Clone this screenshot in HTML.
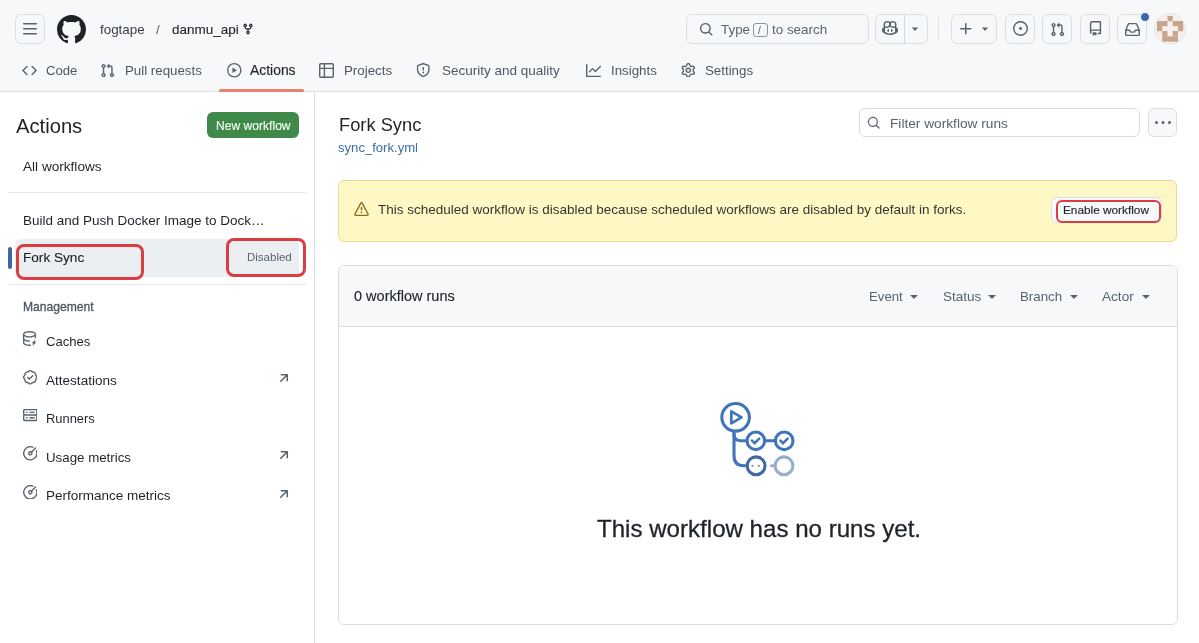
<!DOCTYPE html>
<html><head><meta charset="utf-8"><style>
html,body{margin:0;padding:0;width:1199px;height:643px;overflow:hidden;background:#fff;font-family:"Liberation Sans",sans-serif;}
.t{position:absolute;white-space:nowrap;line-height:1;will-change:transform;}
.b{position:absolute;display:block;}
</style></head><body>
<div class="b" style="left:0px;top:0px;width:1199px;height:92px;background:#f6f8fa;"></div>
<div class="b" style="left:0px;top:91px;width:1199px;height:1px;background:#d8dee4;"></div>
<div class="b" style="left:15px;top:14px;width:30px;height:30px;border:1px solid #dadfe4;border-radius:6px;box-sizing:border-box;background:#f6f8fa;"></div>
<svg class="b" style="left:22px;top:21px;" width="16" height="16" viewBox="0 0 16 16"><path fill="#59636e" d="M1 2.75A.75.75 0 0 1 1.75 2h12.5a.75.75 0 0 1 0 1.5H1.75A.75.75 0 0 1 1 2.75Zm0 5A.75.75 0 0 1 1.75 7h12.5a.75.75 0 0 1 0 1.5H1.75A.75.75 0 0 1 1 7.75ZM1.75 12h12.5a.75.75 0 0 1 0 1.5H1.75a.75.75 0 0 1 0-1.5Z"/></svg>
<svg class="b" style="left:57px;top:14.5px;" width="29" height="29" viewBox="0 0 16 16"><path fill="#1f2328" d="M8 0c4.42 0 8 3.58 8 8a8.013 8.013 0 0 1-5.45 7.59c-.4.08-.55-.17-.55-.38 0-.27.01-1.13.01-2.2 0-.75-.25-1.23-.54-1.48 1.78-.2 3.65-.88 3.65-3.95 0-.88-.31-1.59-.82-2.15.08-.2.36-1.02-.08-2.12 0 0-.67-.22-2.2.82-.64-.18-1.32-.27-2-.27-.68 0-1.36.09-2 .27-1.53-1.03-2.2-.82-2.2-.82-.44 1.1-.16 1.92-.08 2.12-.51.56-.82 1.28-.82 2.15 0 3.06 1.86 3.75 3.64 3.95-.23.2-.44.55-.51 1.07-.46.21-1.61.55-2.33-.66-.15-.24-.6-.83-1.23-.82-.67.01-.27.38.01.53.34.19.73.9.82 1.13.16.45.68 1.31 2.69.94 0 .67.01 1.3.01 1.49 0 .21-.15.45-.55.38A7.995 7.995 0 0 1 0 8c0-4.42 3.58-8 8-8Z"/></svg>
<div class="t" style="left:99.80px;top:23.00px;font-size:13.4px;color:#3a4046;">fogtape</div>
<div class="t" style="left:155.50px;top:23.00px;font-size:13.4px;color:#59636e;">/</div>
<div class="t" style="left:171.80px;top:23.00px;font-size:13.5px;color:#1f2328;-webkit-text-stroke:0.12px #1f2328;">danmu_api</div>
<svg class="b" style="left:242px;top:23.2px;" width="12" height="12" viewBox="0 0 16 16"><path fill="#1f2328" d="M5 5.372v.878c0 .414.336.75.75.75h4.5a.75.75 0 0 0 .75-.75v-.878a2.25 2.25 0 1 1 1.5 0v.878a2.25 2.25 0 0 1-2.25 2.25h-1.5v2.128a2.251 2.251 0 1 1-1.5 0V8.5h-1.5A2.25 2.25 0 0 1 3.5 6.25v-.878a2.25 2.25 0 1 1 1.5 0ZM5 3.25a.75.75 0 1 0-1.5 0 .75.75 0 0 0 1.5 0Zm6.75.75a.75.75 0 1 0 0-1.5.75.75 0 0 0 0 1.5Zm-3 8.75a.75.75 0 1 0-1.5 0 .75.75 0 0 0 1.5 0Z"/></svg>
<div class="b" style="left:686px;top:14px;width:183px;height:30px;border:1px solid #dadfe4;border-radius:6px;box-sizing:border-box;background:#f6f8fa;"></div>
<svg class="b" style="left:698.5px;top:21.5px;" width="14.5" height="14.5" viewBox="0 0 16 16"><path fill="#59636e" d="M10.68 11.74a6 6 0 0 1-7.922-8.982 6 6 0 0 1 8.982 7.922l3.04 3.04a.749.749 0 0 1-.326 1.275.749.749 0 0 1-.734-.215ZM11.5 7a4.499 4.499 0 1 0-8.997 0A4.499 4.499 0 0 0 11.5 7Z"/></svg>
<div class="t" style="left:721.00px;top:22.50px;font-size:13.4px;color:#59636e;">Type</div>
<div class="b" style="left:753px;top:23px;width:15px;height:14px;border:1px solid #8c959f;border-radius:3px;box-sizing:border-box;"></div>
<div class="t" style="left:758.00px;top:25.51px;font-size:10px;color:#59636e;">/</div>
<div class="t" style="left:772.00px;top:22.50px;font-size:13.4px;color:#59636e;">to search</div>
<div class="b" style="left:875px;top:14px;width:53px;height:30px;border:1px solid #dadfe4;border-radius:6px;box-sizing:border-box;background:#f6f8fa;"></div>
<div class="b" style="left:904px;top:14px;width:1px;height:30px;background:#d1d9e0;"></div>
<svg class="b" style="left:882px;top:20.3px;" width="16" height="16" viewBox="0 0 16 16"><path fill="#59636e" d="M7.998 15.035c-4.562 0-7.873-2.914-7.998-3.749V9.338c.085-.628.677-1.686 1.588-2.065.013-.07.024-.143.036-.218.029-.183.06-.384.126-.612-.201-.508-.254-1.084-.254-1.656 0-.87.128-1.769.693-2.484.579-.733 1.494-1.124 2.724-1.261 1.206-.134 2.262.034 2.944.765.05.053.096.108.139.165.044-.057.094-.112.143-.165.682-.731 1.738-.899 2.944-.765 1.23.137 2.145.528 2.724 1.261.566.715.693 1.614.693 2.484 0 .572-.053 1.148-.254 1.656.066.228.098.429.126.612.012.076.024.148.037.218.924.385 1.522 1.471 1.591 2.095v1.872c0 .766-3.351 3.795-8.002 3.795Zm0-1.485c2.28 0 4.584-1.11 5.002-1.433V7.862l-.023-.116c-.49.21-1.075.291-1.727.291-1.146 0-2.059-.327-2.71-.991A3.222 3.222 0 0 1 8 6.303a3.24 3.24 0 0 1-.544.743c-.65.664-1.563.991-2.71.991-.652 0-1.236-.081-1.727-.291l-.023.116v4.255c.419.323 2.722 1.433 5.002 1.433ZM6.762 2.83c-.193-.206-.637-.413-1.682-.297-1.019.113-1.479.404-1.713.7-.247.312-.369.789-.369 1.554 0 .793.129 1.171.308 1.371.162.181.519.379 1.442.379.853 0 1.339-.235 1.638-.54.315-.322.527-.827.617-1.553.117-.935-.037-1.395-.241-1.614Zm4.155-.297c-1.044-.116-1.488.091-1.681.297-.204.219-.359.679-.242 1.614.091.726.303 1.231.618 1.553.299.305.784.54 1.638.54.922 0 1.28-.198 1.442-.379.179-.2.308-.578.308-1.371 0-.765-.123-1.242-.37-1.554-.233-.296-.693-.587-1.713-.7Z"/><path fill="#59636e" d="M6.25 9.037a.75.75 0 0 1 .75.75v1.501a.75.75 0 0 1-1.5 0V9.787a.75.75 0 0 1 .75-.75Zm4.25.75v1.501a.75.75 0 0 1-1.5 0V9.787a.75.75 0 0 1 1.5 0Z"/></svg>
<svg class="b" style="left:910px;top:25.3px;" width="10" height="10" viewBox="2 4 12 12"><path fill="#59636e" d="m4.427 7.427 3.396 3.396a.25.25 0 0 0 .354 0l3.396-3.396A.25.25 0 0 0 11.396 7H4.604a.25.25 0 0 0-.177.427Z"/></svg>
<div class="b" style="left:938px;top:17px;width:1px;height:23px;background:#dde1e5;"></div>
<div class="b" style="left:951px;top:14px;width:46px;height:30px;border:1px solid #dadfe4;border-radius:6px;box-sizing:border-box;background:#f6f8fa;"></div>
<svg class="b" style="left:958px;top:21px;" width="16" height="16" viewBox="0 0 16 16"><path fill="#59636e" d="M7.75 2a.75.75 0 0 1 .75.75V7h4.25a.75.75 0 0 1 0 1.5H8.5v4.25a.75.75 0 0 1-1.5 0V8.5H2.75a.75.75 0 0 1 0-1.5H7V2.75A.75.75 0 0 1 7.75 2Z"/></svg>
<svg class="b" style="left:980px;top:25.3px;" width="10" height="10" viewBox="2 4 12 12"><path fill="#59636e" d="m4.427 7.427 3.396 3.396a.25.25 0 0 0 .354 0l3.396-3.396A.25.25 0 0 0 11.396 7H4.604a.25.25 0 0 0-.177.427Z"/></svg>
<div class="b" style="left:1005px;top:14px;width:30px;height:30px;border:1px solid #dadfe4;border-radius:6px;box-sizing:border-box;background:#f6f8fa;"></div>
<svg class="b" style="left:1012.5px;top:21px;" width="15" height="15" viewBox="0 0 16 16"><path fill="#59636e" d="M8 9.5a1.5 1.5 0 1 0 0-3 1.5 1.5 0 0 0 0 3Z"/><path fill="#59636e" d="M8 0a8 8 0 1 1 0 16A8 8 0 0 1 8 0ZM1.5 8a6.5 6.5 0 1 0 13 0 6.5 6.5 0 0 0-13 0Z"/></svg>
<div class="b" style="left:1042px;top:14px;width:30px;height:30px;border:1px solid #dadfe4;border-radius:6px;box-sizing:border-box;background:#f6f8fa;"></div>
<svg class="b" style="left:1049.6px;top:21.8px;" width="15" height="15" viewBox="0 0 16 16"><path fill="#59636e" d="M1.5 3.25a2.25 2.25 0 1 1 3 2.122v5.256a2.251 2.251 0 1 1-1.5 0V5.372A2.25 2.25 0 0 1 1.5 3.25Zm5.677-.177L9.573.677A.25.25 0 0 1 10 .854V2.5h1A2.5 2.5 0 0 1 13.5 5v5.628a2.251 2.251 0 1 1-1.5 0V5a1 1 0 0 0-1-1h-1v1.646a.25.25 0 0 1-.427.177L7.177 3.427a.25.25 0 0 1 0-.354ZM3.75 2.5a.75.75 0 1 0 0 1.5.75.75 0 0 0 0-1.5Zm0 9.5a.75.75 0 1 0 0 1.5.75.75 0 0 0 0-1.5Zm8.25.75a.75.75 0 1 0 1.5 0 .75.75 0 0 0-1.5 0Z"/></svg>
<div class="b" style="left:1080px;top:14px;width:30px;height:30px;border:1px solid #dadfe4;border-radius:6px;box-sizing:border-box;background:#f6f8fa;"></div>
<svg class="b" style="left:1087.5px;top:21px;" width="15" height="15" viewBox="0 0 16 16"><path fill="#59636e" d="M2 2.5A2.5 2.5 0 0 1 4.5 0h8.75a.75.75 0 0 1 .75.75v12.5a.75.75 0 0 1-.75.75h-2.5a.75.75 0 0 1 0-1.5h1.75v-2h-8a1 1 0 0 0-.714 1.7.75.75 0 1 1-1.072 1.05A2.495 2.495 0 0 1 2 11.5Zm10.5-1h-8a1 1 0 0 0-1 1v6.708A2.486 2.486 0 0 1 4.5 9h8ZM5 12.25a.25.25 0 0 1 .25-.25h3.5a.25.25 0 0 1 .25.25v3.25a.25.25 0 0 1-.4.2l-1.45-1.087a.249.249 0 0 0-.3 0L5.4 15.7a.25.25 0 0 1-.4-.2Z"/></svg>
<div class="b" style="left:1117px;top:14px;width:30px;height:30px;border:1px solid #dadfe4;border-radius:6px;box-sizing:border-box;background:#f6f8fa;"></div>
<svg class="b" style="left:1125px;top:21.5px;" width="15" height="15" viewBox="0 0 16 16"><path fill="#59636e" d="M2.8 2.06A1.75 1.75 0 0 1 4.41 1h7.18c.7 0 1.333.417 1.61 1.06l2.74 6.395c.04.093.06.194.06.295v4.5A1.75 1.75 0 0 1 14.25 15H1.75A1.75 1.75 0 0 1 0 13.25v-4.5c0-.101.02-.202.06-.295Zm1.61.44a.25.25 0 0 0-.23.152L1.887 8H4.75a.75.75 0 0 1 .6.3L6.625 10h2.75l1.275-1.7a.75.75 0 0 1 .6-.3h2.863L11.82 2.652a.25.25 0 0 0-.23-.152Zm10.09 7h-2.875l-1.275 1.7a.75.75 0 0 1-.6.3h-3.5a.75.75 0 0 1-.6-.3L4.375 9.5H1.5v3.75c0 .138.112.25.25.25h12.5a.25.25 0 0 0 .25-.25Z"/></svg>
<div class="b" style="left:1139.5px;top:11.5px;width:10.0px;height:10.0px;background:#3b66ac;border:1.5px solid #f6f8fa;border-radius:50%;box-sizing:border-box;"></div>
<svg class="b" style="left:1154px;top:13px" width="32" height="32" viewBox="0 0 32 32"><defs><clipPath id="av"><circle cx="16" cy="16" r="16"/></clipPath></defs><g clip-path="url(#av)"><rect width="32" height="32" fill="#f6efeb"/>
<g fill="#c8a58d">
<rect x="13.5" y="3" width="5.2" height="5.2"/>
<rect x="3" y="8" width="10.5" height="5.2"/><rect x="18.7" y="8" width="10.5" height="5.2"/>
<rect x="3" y="13" width="5.2" height="5.2"/><rect x="24" y="13" width="5.2" height="5.2"/>
<rect x="8.2" y="18" width="5.3" height="5.4"/><rect x="18.7" y="18" width="5.3" height="5.4"/>
<rect x="8.2" y="23.3" width="15.8" height="5.4"/>
</g></g>
<circle cx="16" cy="16" r="15.5" fill="none" stroke="#e6e8eb" stroke-width="1"/></svg>
<svg class="b" style="left:22.3px;top:62.5px;" width="15" height="15" viewBox="0 0 16 16"><path fill="#59636e" d="m11.28 3.22 4.25 4.25a.75.75 0 0 1 0 1.06l-4.25 4.25a.749.749 0 0 1-1.275-.326.749.749 0 0 1 .215-.734L13.94 8l-3.72-3.72a.749.749 0 0 1 .326-1.275.749.749 0 0 1 .734.215Zm-6.56 0a.751.751 0 0 1 1.042.018.751.751 0 0 1 .018 1.042L2.06 8l3.72 3.72a.749.749 0 0 1-.326 1.275.749.749 0 0 1-.734-.215L.47 8.53a.75.75 0 0 1 0-1.06Z"/></svg>
<div class="t" style="left:45.80px;top:63.72px;font-size:13.1px;color:#50575e;">Code</div>
<svg class="b" style="left:99.9px;top:63.1px;" width="15" height="15" viewBox="0 0 16 16"><path fill="#59636e" d="M1.5 3.25a2.25 2.25 0 1 1 3 2.122v5.256a2.251 2.251 0 1 1-1.5 0V5.372A2.25 2.25 0 0 1 1.5 3.25Zm5.677-.177L9.573.677A.25.25 0 0 1 10 .854V2.5h1A2.5 2.5 0 0 1 13.5 5v5.628a2.251 2.251 0 1 1-1.5 0V5a1 1 0 0 0-1-1h-1v1.646a.25.25 0 0 1-.427.177L7.177 3.427a.25.25 0 0 1 0-.354ZM3.75 2.5a.75.75 0 1 0 0 1.5.75.75 0 0 0 0-1.5Zm0 9.5a.75.75 0 1 0 0 1.5.75.75 0 0 0 0-1.5Zm8.25.75a.75.75 0 1 0 1.5 0 .75.75 0 0 0-1.5 0Z"/></svg>
<div class="t" style="left:125.00px;top:63.70px;font-size:13.3px;color:#50575e;">Pull requests</div>
<svg class="b" style="left:227.2px;top:63px;" width="14.5" height="14.5" viewBox="0 0 16 16"><path fill="#59636e" d="M8 0a8 8 0 1 1 0 16A8 8 0 0 1 8 0ZM1.5 8a6.5 6.5 0 1 0 13 0 6.5 6.5 0 0 0-13 0Zm4.879-2.773 4.264 2.559a.25.25 0 0 1 0 .428l-4.264 2.559A.25.25 0 0 1 6 10.559V5.442a.25.25 0 0 1 .379-.215Z"/></svg>
<div class="t" style="left:250.00px;top:63.71px;font-size:13.9px;color:#1f2328;-webkit-text-stroke:0.15px #1f2328;">Actions</div>
<div class="b" style="left:219px;top:89px;width:85px;height:3px;background:#e8806e;border-radius:2px;"></div>
<svg class="b" style="left:319.3px;top:62.5px;" width="15" height="15" viewBox="0 0 16 16"><path fill="#59636e" d="M0 1.75C0 .784.784 0 1.75 0h12.5C15.216 0 16 .784 16 1.75v12.5A1.75 1.75 0 0 1 14.25 16H1.75A1.75 1.75 0 0 1 0 14.25ZM6.5 6.5v8h7.75a.25.25 0 0 0 .25-.25V6.5Zm8-1.5V1.75a.25.25 0 0 0-.25-.25H6.5V5Zm-13 1.5v7.75c0 .138.112.25.25.25H5v-8ZM5 5V1.5H1.75a.25.25 0 0 0-.25.25V5Z"/></svg>
<div class="t" style="left:343.70px;top:63.70px;font-size:13.3px;color:#50575e;">Projects</div>
<svg class="b" style="left:415.5px;top:63px;" width="14.5" height="14.5" viewBox="0 0 16 16"><path fill="#59636e" d="M7.467.133a1.748 1.748 0 0 1 1.066 0l5.25 1.68A1.75 1.75 0 0 1 15 3.48V7c0 1.566-.32 3.182-1.303 4.682-.983 1.498-2.585 2.813-5.032 3.855a1.697 1.697 0 0 1-1.33 0c-2.447-1.042-4.049-2.357-5.032-3.855C1.32 10.182 1 8.566 1 7V3.48a1.755 1.755 0 0 1 1.217-1.667Zm.61 1.429a.25.25 0 0 0-.153 0l-5.25 1.68a.25.25 0 0 0-.174.238V7c0 1.358.275 2.666 1.057 3.86.784 1.194 2.121 2.34 4.366 3.297a.196.196 0 0 0 .154 0c2.245-.956 3.582-2.104 4.366-3.298C13.225 9.666 13.5 8.36 13.5 7V3.48a.251.251 0 0 0-.174-.237l-5.25-1.68ZM8.75 4.75v3a.75.75 0 0 1-1.5 0v-3a.75.75 0 0 1 1.5 0ZM9 10.5a1 1 0 1 1-2 0 1 1 0 0 1 2 0Z"/></svg>
<div class="t" style="left:441.70px;top:63.71px;font-size:13.5px;color:#50575e;">Security and quality</div>
<svg class="b" style="left:585.8px;top:62.8px;" width="15" height="15" viewBox="0 0 16 16"><path fill="#59636e" d="M1.5 1.75V13.5h13.75a.75.75 0 0 1 0 1.5H.75a.75.75 0 0 1-.75-.75V1.75a.75.75 0 0 1 1.5 0Zm14.28 2.53-5.25 5.25a.75.75 0 0 1-1.06 0L7 7.06 4.28 9.78a.751.751 0 0 1-1.042-.018.751.751 0 0 1-.018-1.042l3.25-3.25a.75.75 0 0 1 1.06 0L10 7.94l4.72-4.72a.751.751 0 0 1 1.042.018.751.751 0 0 1 .018 1.042Z"/></svg>
<div class="t" style="left:610.50px;top:63.70px;font-size:13.3px;color:#50575e;">Insights</div>
<svg class="b" style="left:680.6px;top:62.5px;" width="14.6" height="14.6" viewBox="0 0 16 16"><path fill="#59636e" d="M8 0a8.2 8.2 0 0 1 .701.031C9.444.095 9.99.645 10.16 1.29l.288 1.107c.018.066.079.158.212.224.231.114.454.243.668.386.123.082.233.09.299.071l1.103-.303c.644-.176 1.392.021 1.82.63.27.385.506.792.704 1.218.315.675.111 1.422-.364 1.891l-.814.806c-.049.048-.098.147-.088.294.016.257.016.515 0 .772-.01.147.038.246.088.294l.814.806c.475.469.679 1.216.364 1.891a7.977 7.977 0 0 1-.704 1.217c-.428.61-1.176.807-1.82.63l-1.102-.302c-.067-.019-.177-.011-.3.071a5.909 5.909 0 0 1-.668.386c-.133.066-.194.158-.211.224l-.29 1.106c-.168.646-.715 1.196-1.458 1.26a8.006 8.006 0 0 1-1.402 0c-.743-.064-1.289-.614-1.458-1.26l-.289-1.106c-.018-.066-.079-.158-.212-.224a5.738 5.738 0 0 1-.668-.386c-.123-.082-.233-.09-.299-.071l-1.103.303c-.644.176-1.392-.021-1.82-.63a8.12 8.12 0 0 1-.704-1.218c-.315-.675-.111-1.422.363-1.891l.815-.806c.05-.048.098-.147.088-.294a6.214 6.214 0 0 1 0-.772c.01-.147-.038-.246-.088-.294l-.815-.806C.635 6.045.431 5.298.746 4.623a7.92 7.92 0 0 1 .704-1.217c.428-.61 1.176-.807 1.82-.63l1.102.302c.067.019.177.011.3-.071.214-.143.437-.272.668-.386.133-.066.194-.158.211-.224l.29-1.106C6.009.645 6.556.095 7.299.03 7.53.01 7.764 0 8 0Zm-.571 1.525c-.036.003-.108.036-.137.146l-.289 1.105c-.147.561-.549.967-.998 1.189-.173.086-.34.183-.5.29-.417.278-.97.423-1.529.27l-1.103-.303c-.109-.03-.175.016-.195.045-.22.312-.412.644-.573.99-.014.031-.021.11.059.19l.815.806c.411.406.562.957.53 1.456a4.709 4.709 0 0 0 0 .582c.032.499-.119 1.05-.53 1.456l-.815.806c-.081.08-.073.159-.059.19.162.346.353.677.573.989.02.03.085.076.195.046l1.102-.303c.56-.153 1.113-.008 1.53.27.161.107.328.204.501.29.447.222.85.629.997 1.189l.289 1.105c.029.109.101.143.137.146a6.6 6.6 0 0 0 1.142 0c.036-.003.108-.036.137-.146l.289-1.105c.147-.561.549-.967.998-1.189.173-.086.34-.183.5-.29.417-.278.97-.423 1.529-.27l1.103.303c.109.029.175-.016.195-.045.22-.313.411-.644.573-.99.014-.031.021-.11-.059-.19l-.815-.806c-.411-.406-.562-.957-.53-1.456a4.709 4.709 0 0 0 0-.582c-.032-.499.119-1.05.53-1.456l.815-.806c.081-.08.073-.159.059-.19a6.464 6.464 0 0 0-.573-.989c-.02-.03-.085-.076-.195-.046l-1.102.303c-.56.153-1.113.008-1.53-.27a4.44 4.44 0 0 0-.501-.29c-.447-.222-.85-.629-.997-1.189l-.289-1.105c-.029-.11-.101-.143-.137-.146a6.6 6.6 0 0 0-1.142 0ZM11 8a3 3 0 1 1-6 0 3 3 0 0 1 6 0ZM9.5 8a1.5 1.5 0 1 0-3.001.001A1.5 1.5 0 0 0 9.5 8Z"/></svg>
<div class="t" style="left:704.70px;top:63.70px;font-size:13.3px;color:#50575e;">Settings</div>
<div class="b" style="left:314px;top:92px;width:1px;height:551px;background:#d8dee4;"></div>
<div class="t" style="left:15.80px;top:115.70px;font-size:20.2px;color:#1f2328;">Actions</div>
<div class="b" style="left:207px;top:112.3px;width:92px;height:26.000000000000014px;background:#3f8a4b;border-radius:6px;"></div>
<div class="t" style="left:215.70px;top:120.20px;font-size:12.1px;color:#f4fbf4;-webkit-text-stroke:0.15px #f4fbf4;">New workflow</div>
<div class="t" style="left:23.00px;top:159.81px;font-size:13.6px;color:#1f2328;">All workflows</div>
<div class="b" style="left:8px;top:192px;width:298px;height:1px;background:#e3e7eb;"></div>
<div class="t" style="left:23.00px;top:214.40px;font-size:13.5px;color:#1f2328;">Build and Push Docker Image to Dock…</div>
<div class="b" style="left:15px;top:239px;width:284px;height:38px;background:#eceff2;border-radius:6px;"></div>
<div class="b" style="left:7.5px;top:246.5px;width:4.0px;height:22.5px;background:#3d67a8;border-radius:2px;"></div>
<div class="t" style="left:23.00px;top:251.31px;font-size:13.6px;color:#1f2328;-webkit-text-stroke:0.15px #1f2328;">Fork Sync</div>
<div class="t" style="left:247.40px;top:252.21px;font-size:11.5px;color:#59636e;">Disabled</div>
<div class="b" style="left:8px;top:284px;width:298px;height:1px;background:#e3e7eb;"></div>
<div class="t" style="left:22.80px;top:300.91px;font-size:12.1px;color:#4f565e;-webkit-text-stroke:0.3px #4f565e;">Management</div>
<svg class="b" style="left:22.4px;top:331px;" width="15" height="15" viewBox="0 0 16 16"><path fill="#59636e" d="M2.5 3.5c0-.133.058-.318.282-.55.227-.237.592-.484 1.1-.708C4.899 1.795 6.354 1.5 8 1.5c1.647 0 3.102.295 4.117.742.51.224.874.47 1.101.707.224.233.282.418.282.551 0 .133-.058.318-.282.55-.227.237-.592.484-1.1.708C11.101 5.205 9.646 5.5 8 5.5c-1.647 0-3.102-.295-4.117-.742-.51-.224-.874-.47-1.101-.707-.224-.233-.282-.418-.282-.551ZM1 3.5v9c0 .661.286 1.231.714 1.68.423.441.991.79 1.618 1.065C4.601 15.804 6.252 16 8 16c.301 0 .599-.006.892-.017a.75.75 0 1 0-.055-1.499A22.79 22.79 0 0 1 8 14.5c-1.647 0-3.102-.295-4.117-.742-.51-.224-.874-.47-1.101-.707-.224-.233-.282-.418-.282-.551v-2.486c.317.204.666.385 1.03.544C4.786 11.118 6.352 11.5 8 11.5a.75.75 0 0 0 0-1.5c-1.647 0-3.102-.295-4.117-.742-.51-.224-.874-.47-1.101-.707-.224-.233-.282-.418-.282-.551V5.514c.317.204.666.385 1.03.544C4.786 6.618 6.352 7 8 7c1.648 0 3.214-.382 4.47-.942.364-.159.713-.34 1.03-.544V7.25a.75.75 0 0 0 1.5 0V3.5c0-.661-.286-1.231-.714-1.68-.423-.441-.991-.79-1.618-1.065C11.399.196 9.748 0 8 0 6.252 0 4.601.196 3.332.755c-.627.275-1.195.624-1.618 1.065C1.286 2.27 1 2.839 1 3.5Zm13.239 6.286a.25.25 0 0 0-.379-.237l-3.41 3.155a.25.25 0 0 0 .17.433h1.33l-.62 2.07a.25.25 0 0 0 .38.287l3.41-3.155a.25.25 0 0 0-.17-.433h-1.33Z"/></svg>
<div class="t" style="left:45.60px;top:335.10px;font-size:13.1px;color:#1f2328;">Caches</div>
<svg class="b" style="left:22.8px;top:370.4px;" width="14.5" height="14.5" viewBox="0 0 16 16"><path fill="#59636e" d="m9.585.52.929.68c.153.112.331.186.518.215l1.138.175a2.678 2.678 0 0 1 2.24 2.24l.174 1.139c.029.187.103.365.215.518l.68.928a2.677 2.677 0 0 1 0 3.17l-.68.928a1.174 1.174 0 0 0-.215.518l-.175 1.138a2.678 2.678 0 0 1-2.241 2.241l-1.138.175a1.17 1.17 0 0 0-.518.215l-.928.68a2.677 2.677 0 0 1-3.17 0l-.928-.68a1.174 1.174 0 0 0-.518-.215L3.83 14.41a2.678 2.678 0 0 1-2.24-2.24l-.175-1.138a1.17 1.17 0 0 0-.215-.518l-.68-.928a2.677 2.677 0 0 1 0-3.17l.68-.928c.112-.153.186-.331.215-.518l.175-1.14a2.678 2.678 0 0 1 2.24-2.24l1.139-.175c.187-.029.365-.103.518-.215l.928-.68a2.677 2.677 0 0 1 3.17 0ZM7.303 1.728l-.927.68a2.67 2.67 0 0 1-1.18.489l-1.137.174a1.179 1.179 0 0 0-.987.987l-.174 1.136a2.677 2.677 0 0 1-.489 1.18l-.68.928a1.18 1.18 0 0 0 0 1.394l.68.927c.256.348.424.753.489 1.18l.174 1.137c.078.509.478.909.987.987l1.136.174a2.67 2.67 0 0 1 1.18.489l.928.68c.414.305.979.305 1.394 0l.927-.68a2.67 2.67 0 0 1 1.18-.489l1.137-.174a1.18 1.18 0 0 0 .987-.987l.174-1.136a2.67 2.67 0 0 1 .489-1.18l.68-.928a1.176 1.176 0 0 0 0-1.394l-.68-.927a2.686 2.686 0 0 1-.489-1.18l-.174-1.137a1.179 1.179 0 0 0-.987-.987l-1.136-.174a2.677 2.677 0 0 1-1.18-.489l-.928-.68a1.176 1.176 0 0 0-1.394 0ZM11.28 6.78l-3.75 3.75a.75.75 0 0 1-1.06 0L4.72 8.78a.751.751 0 0 1 .018-1.042.751.751 0 0 1 1.042-.018l1.22 1.22 3.22-3.22a.751.751 0 0 1 1.042.018.751.751 0 0 1 .018 1.042Z"/></svg>
<div class="t" style="left:45.60px;top:374.00px;font-size:13.55px;color:#1f2328;">Attestations</div>
<svg class="b" style="left:22.8px;top:407.7px;" width="14.5" height="14.5" viewBox="0 0 16 16"><path fill="#59636e" d="M1.75 1h12.5c.966 0 1.75.784 1.75 1.75v4c0 .372-.116.717-.314 1 .198.283.314.628.314 1v4a1.75 1.75 0 0 1-1.75 1.75H1.75A1.75 1.75 0 0 1 0 12.75v-4c0-.358.109-.707.314-1a1.739 1.739 0 0 1-.314-1v-4C0 1.784.784 1 1.75 1ZM1.5 2.75v4c0 .138.112.25.25.25h12.5a.25.25 0 0 0 .25-.25v-4a.25.25 0 0 0-.25-.25H1.75a.25.25 0 0 0-.25.25Zm.25 5.75a.25.25 0 0 0-.25.25v4c0 .138.112.25.25.25h12.5a.25.25 0 0 0 .25-.25v-4a.25.25 0 0 0-.25-.25ZM7 4.75A.75.75 0 0 1 7.75 4h4.5a.75.75 0 0 1 0 1.5h-4.5A.75.75 0 0 1 7 4.75ZM7.75 10h4.5a.75.75 0 0 1 0 1.5h-4.5a.75.75 0 0 1 0-1.5ZM3 4.75A.75.75 0 0 1 3.75 4h.5a.75.75 0 0 1 0 1.5h-.5A.75.75 0 0 1 3 4.75ZM3.75 10h.5a.75.75 0 0 1 0 1.5h-.5a.75.75 0 0 1 0-1.5Z"/></svg>
<div class="t" style="left:45.60px;top:412.60px;font-size:12.9px;color:#1f2328;">Runners</div>
<svg class="b" style="left:22.8px;top:446.2px;" width="14.6" height="14.6" viewBox="0 0 16 16"><path fill="#59636e" d="M8 1.5a6.5 6.5 0 1 0 6.016 4.035.75.75 0 0 1 1.388-.57 8 8 0 1 1-4.37-4.37.75.75 0 0 1-.569 1.389A6.479 6.479 0 0 0 8 1.5Zm6.28.22a.75.75 0 0 1 0 1.06l-4.063 4.064a2.5 2.5 0 1 1-1.06-1.06L13.22 1.72a.75.75 0 0 1 1.06 0ZM8 7a1 1 0 1 0 0 2 1 1 0 0 0 0-2Z"/></svg>
<div class="t" style="left:45.60px;top:450.61px;font-size:13.3px;color:#1f2328;">Usage metrics</div>
<svg class="b" style="left:22.8px;top:484.7px;" width="14.6" height="14.6" viewBox="0 0 16 16"><path fill="#59636e" d="M8 1.5a6.5 6.5 0 1 0 6.016 4.035.75.75 0 0 1 1.388-.57 8 8 0 1 1-4.37-4.37.75.75 0 0 1-.569 1.389A6.479 6.479 0 0 0 8 1.5Zm6.28.22a.75.75 0 0 1 0 1.06l-4.063 4.064a2.5 2.5 0 1 1-1.06-1.06L13.22 1.72a.75.75 0 0 1 1.06 0ZM8 7a1 1 0 1 0 0 2 1 1 0 0 0 0-2Z"/></svg>
<div class="t" style="left:45.60px;top:488.71px;font-size:13.5px;color:#1f2328;">Performance metrics</div>
<svg class="b" style="left:278px;top:371.5px;" width="12" height="12" viewBox="2 2 12 12"><path fill="#59636e" d="M4.53 4.75A.75.75 0 0 1 5.28 4h6.01a.75.75 0 0 1 .75.75v6.01a.75.75 0 0 1-1.5 0v-4.2l-5.26 5.261a.749.749 0 0 1-1.275-.326.749.749 0 0 1 .215-.734L9.48 5.5h-4.2a.75.75 0 0 1-.75-.75Z"/></svg>
<svg class="b" style="left:278px;top:449px;" width="12" height="12" viewBox="2 2 12 12"><path fill="#59636e" d="M4.53 4.75A.75.75 0 0 1 5.28 4h6.01a.75.75 0 0 1 .75.75v6.01a.75.75 0 0 1-1.5 0v-4.2l-5.26 5.261a.749.749 0 0 1-1.275-.326.749.749 0 0 1 .215-.734L9.48 5.5h-4.2a.75.75 0 0 1-.75-.75Z"/></svg>
<svg class="b" style="left:278px;top:487.5px;" width="12" height="12" viewBox="2 2 12 12"><path fill="#59636e" d="M4.53 4.75A.75.75 0 0 1 5.28 4h6.01a.75.75 0 0 1 .75.75v6.01a.75.75 0 0 1-1.5 0v-4.2l-5.26 5.261a.749.749 0 0 1-1.275-.326.749.749 0 0 1 .215-.734L9.48 5.5h-4.2a.75.75 0 0 1-.75-.75Z"/></svg>
<div class="t" style="left:338.50px;top:115.51px;font-size:18.3px;color:#1f2328;">Fork Sync</div>
<div class="t" style="left:337.80px;top:140.51px;font-size:13.1px;color:#3a6ea5;">sync_fork.yml</div>
<div class="b" style="left:859px;top:108px;width:281px;height:29px;border:1px solid #d9dee3;border-radius:6px;box-sizing:border-box;background:#fff;"></div>
<svg class="b" style="left:866.5px;top:116px;" width="13.5" height="13.5" viewBox="0 0 16 16"><path fill="#59636e" d="M10.68 11.74a6 6 0 0 1-7.922-8.982 6 6 0 0 1 8.982 7.922l3.04 3.04a.749.749 0 0 1-.326 1.275.749.749 0 0 1-.734-.215ZM11.5 7a4.499 4.499 0 1 0-8.997 0A4.499 4.499 0 0 0 11.5 7Z"/></svg>
<div class="t" style="left:890.30px;top:117.00px;font-size:13.7px;color:#59636e;">Filter workflow runs</div>
<div class="b" style="left:1148px;top:108px;width:29px;height:29px;border:1px solid #dadfe4;border-radius:6px;box-sizing:border-box;background:#f6f8fa;"></div>
<svg class="b" style="left:1154.5px;top:114.5px;" width="16" height="16" viewBox="0 0 16 16"><path fill="#59636e" d="M8 9a1.5 1.5 0 1 0 0-3 1.5 1.5 0 0 0 0 3ZM1.5 9a1.5 1.5 0 1 0 0-3 1.5 1.5 0 0 0 0 3Zm13 0a1.5 1.5 0 1 0 0-3 1.5 1.5 0 0 0 0 3Z"/></svg>
<div class="b" style="left:338px;top:180px;width:839px;height:62px;background:#fff8c5;border:1px solid #e9d99a;border-radius:6px;box-sizing:border-box;"></div>
<svg class="b" style="left:353.6px;top:202.3px;" width="15" height="15" viewBox="0 0 16 16"><path fill="#8a6d1f" d="M6.457 1.047c.659-1.234 2.427-1.234 3.086 0l6.082 11.378A1.75 1.75 0 0 1 14.082 15H1.918a1.75 1.75 0 0 1-1.543-2.575Zm1.763.707a.25.25 0 0 0-.44 0L1.698 13.132a.25.25 0 0 0 .22.368h12.164a.25.25 0 0 0 .22-.368Zm.53 3.996v2.5a.75.75 0 0 1-1.5 0v-2.5a.75.75 0 0 1 1.5 0ZM9 11a1 1 0 1 1-2 0 1 1 0 0 1 2 0Z"/></svg>
<div class="t" style="left:377.50px;top:202.71px;font-size:13.5px;color:#34372f;">This scheduled workflow is disabled because scheduled workflows are disabled by default in forks.</div>
<div class="b" style="left:1051px;top:197px;width:111px;height:26px;border:1px solid #dadfe4;border-radius:6px;box-sizing:border-box;background:#f6f8fa;"></div>
<div class="t" style="left:1062.80px;top:205.21px;font-size:11.8px;color:#1f2328;-webkit-text-stroke:0.15px #1f2328;">Enable workflow</div>
<div class="b" style="left:338px;top:265px;width:839.5px;height:360px;border:1px solid #d9dee3;border-radius:6px;box-sizing:border-box;background:#fff;"></div>
<div class="b" style="left:339px;top:266px;width:837.5px;height:61px;background:#f6f8fa;border-bottom:1px solid #d9dee3;border-radius:5px 5px 0 0;box-sizing:border-box;"></div>
<div class="t" style="left:353.80px;top:288.70px;font-size:14.5px;color:#1f2328;-webkit-text-stroke:0.15px #1f2328;">0 workflow runs</div>
<div class="t" style="left:869.30px;top:290.10px;font-size:13.2px;color:#59636e;">Event</div>
<svg class="b" style="left:908px;top:290.3px;" width="12" height="12" viewBox="2 2 12 12"><path fill="#59636e" d="m4.427 7.427 3.396 3.396a.25.25 0 0 0 .354 0l3.396-3.396A.25.25 0 0 0 11.396 7H4.604a.25.25 0 0 0-.177.427Z"/></svg>
<div class="t" style="left:943.00px;top:290.11px;font-size:13.5px;color:#59636e;">Status</div>
<svg class="b" style="left:986px;top:290.3px;" width="12" height="12" viewBox="2 2 12 12"><path fill="#59636e" d="m4.427 7.427 3.396 3.396a.25.25 0 0 0 .354 0l3.396-3.396A.25.25 0 0 0 11.396 7H4.604a.25.25 0 0 0-.177.427Z"/></svg>
<div class="t" style="left:1020.20px;top:290.11px;font-size:13.3px;color:#59636e;">Branch</div>
<svg class="b" style="left:1067.6px;top:290.3px;" width="12" height="12" viewBox="2 2 12 12"><path fill="#59636e" d="m4.427 7.427 3.396 3.396a.25.25 0 0 0 .354 0l3.396-3.396A.25.25 0 0 0 11.396 7H4.604a.25.25 0 0 0-.177.427Z"/></svg>
<div class="t" style="left:1101.80px;top:290.10px;font-size:13.6px;color:#59636e;">Actor</div>
<svg class="b" style="left:1139.7px;top:290.3px;" width="12" height="12" viewBox="2 2 12 12"><path fill="#59636e" d="m4.427 7.427 3.396 3.396a.25.25 0 0 0 .354 0l3.396-3.396A.25.25 0 0 0 11.396 7H4.604a.25.25 0 0 0-.177.427Z"/></svg>
<svg class="b" style="left:716px;top:398px" width="84" height="84" viewBox="0 0 84 84" fill="none" stroke="#4174b8" stroke-width="3.1" stroke-linecap="round">
<circle cx="19.6" cy="19.3" r="13.8"/>
<path d="M15.3 13.4 L25.5 19.4 L15.3 25.4 Z" stroke-width="2.7" stroke-linejoin="round"/>
<circle cx="39.8" cy="42.8" r="8.8"/>
<circle cx="68.2" cy="42.8" r="8.8"/>
<path d="M48.6 42.8 H59.4"/>
<path d="M36.0 42.6 l2.6 2.6 l4.6 -4.6" stroke-width="2.6"/>
<path d="M64.4 42.6 l2.6 2.6 l4.6 -4.6" stroke-width="2.6"/>
<circle cx="40.1" cy="67.8" r="8.9" stroke="#3d68a6"/>
<path d="M18 33.5 V57.8 Q18 67.8 28 67.8 H31.2"/>
<path d="M18 36 Q18 42.8 25 42.8 H31"/>
<circle cx="68" cy="67.8" r="8.9" stroke="#9aaecb"/>
<path d="M55.5 67.8 H58" stroke="#9aaecb"/>
<circle cx="36.5" cy="67.8" r="1.1" fill="#8d8f99" stroke="none"/>
<circle cx="42.9" cy="67.8" r="1.1" fill="#8d8f99" stroke="none"/>
</svg>
<div class="t" style="left:596.50px;top:516.60px;font-size:24.1px;color:#1f2328;-webkit-text-stroke:0.3px #1f2328;">This workflow has no runs yet.</div>
<div class="b" style="left:15.5px;top:244px;width:128.5px;height:36px;border:3px solid #db3d40;border-radius:8px;box-sizing:border-box;"></div>
<div class="b" style="left:226px;top:238px;width:80px;height:39px;border:3px solid #db3d40;border-radius:8px;box-sizing:border-box;"></div>
<div class="b" style="left:1056px;top:200px;width:105px;height:23px;border:2.5px solid #db3d40;border-radius:6px;box-sizing:border-box;"></div>
</body></html>
